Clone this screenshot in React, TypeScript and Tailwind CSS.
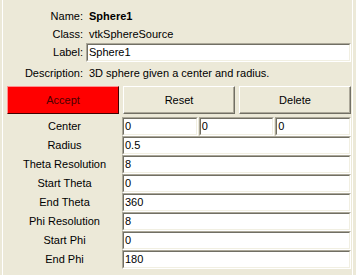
import React from "react";

const font = { fontFamily: '"Liberation Sans", Arial, sans-serif' };

function Entry({ value, className = "" }: { value: string; className?: string }) {
  return (
    <div className={`h-[19px] border-t border-l border-t-[#aca899] border-l-[#aca899] border-b border-r border-b-white border-r-white ${className}`}>
      <div className="h-full border-t border-l border-t-[#716f64] border-l-[#716f64] border-b border-r border-b-[#f1efe2] border-r-[#f1efe2] bg-white flex items-center pl-[1px] text-[11px] text-black leading-none">
        {value}
      </div>
    </div>
  );
}

function Button({ label, red }: { label: string; red?: boolean }) {
  return (
    <div
      className={
        red
          ? "h-[28px] flex items-center justify-center border border-t-[#ff9090] border-l-[#ff9090] border-b-[#400000] border-r-[#400000] bg-[#ff0000] text-[#4a0000] text-[11px]"
          : "h-[28px] flex items-center justify-center border border-t-white border-l-white border-b-[#716f64] border-r-[#716f64] bg-[#ece9d8] text-black text-[11px] shadow-[inset_-1px_-1px_0_#aca899]"
      }
    >
      {label}
    </div>
  );
}

const params: [string, string][] = [
  ["Radius", "0.5"],
  ["Theta Resolution", "8"],
  ["Start Theta", "0"],
  ["End Theta", "360"],
  ["Phi Resolution", "8"],
  ["Start Phi", "0"],
  ["End Phi", "180"],
];

export default function App() {
  return (
    <div className="w-[356px] h-[275px] bg-[#ece9d8] overflow-hidden" style={font}>
      <div className="ml-[2px] mr-[3px] h-full border-l border-r border-white pt-[7px] text-[11px] text-black">
        {/* Header info */}
        <div className="grid grid-cols-[80px_1fr] gap-x-[3px] pr-[1px]">
          <div className="h-[18px] flex items-center justify-end">Name:</div>
          <div className="h-[18px] flex items-center pl-[3px] font-bold">Sphere1</div>
          <div className="h-[18px] flex items-center justify-end">Class:</div>
          <div className="h-[18px] flex items-center pl-[3px]">vtkSphereSource</div>
          <div className="h-[19px] flex items-center justify-end">Label:</div>
          <Entry value="Sphere1" />
          <div className="h-[22px] flex items-center justify-end">Description:</div>
          <div className="h-[22px] flex items-center pl-[3px]">3D sphere given a center and radius.</div>
        </div>

        {/* Buttons */}
        <div className="mt-[2px] ml-[4px] mr-[1px] grid grid-cols-3 gap-x-[4px]">
          <Button label="Accept" red />
          <Button label="Reset" />
          <Button label="Delete" />
        </div>

        {/* Parameters */}
        <div className="mt-[3px] ml-[4px] mr-[1px] grid grid-cols-[115px_1fr]">
          <div className="h-[19px] flex items-center justify-center">Center</div>
          <div className="grid grid-cols-3 gap-x-[1px]">
            <Entry value="0" />
            <Entry value="0" />
            <Entry value="0" />
          </div>
          {params.map(([k, v]) => (
            <React.Fragment key={k}>
              <div className="h-[19px] flex items-center justify-center">{k}</div>
              <Entry value={v} />
            </React.Fragment>
          ))}
        </div>
      </div>
    </div>
  );
}
